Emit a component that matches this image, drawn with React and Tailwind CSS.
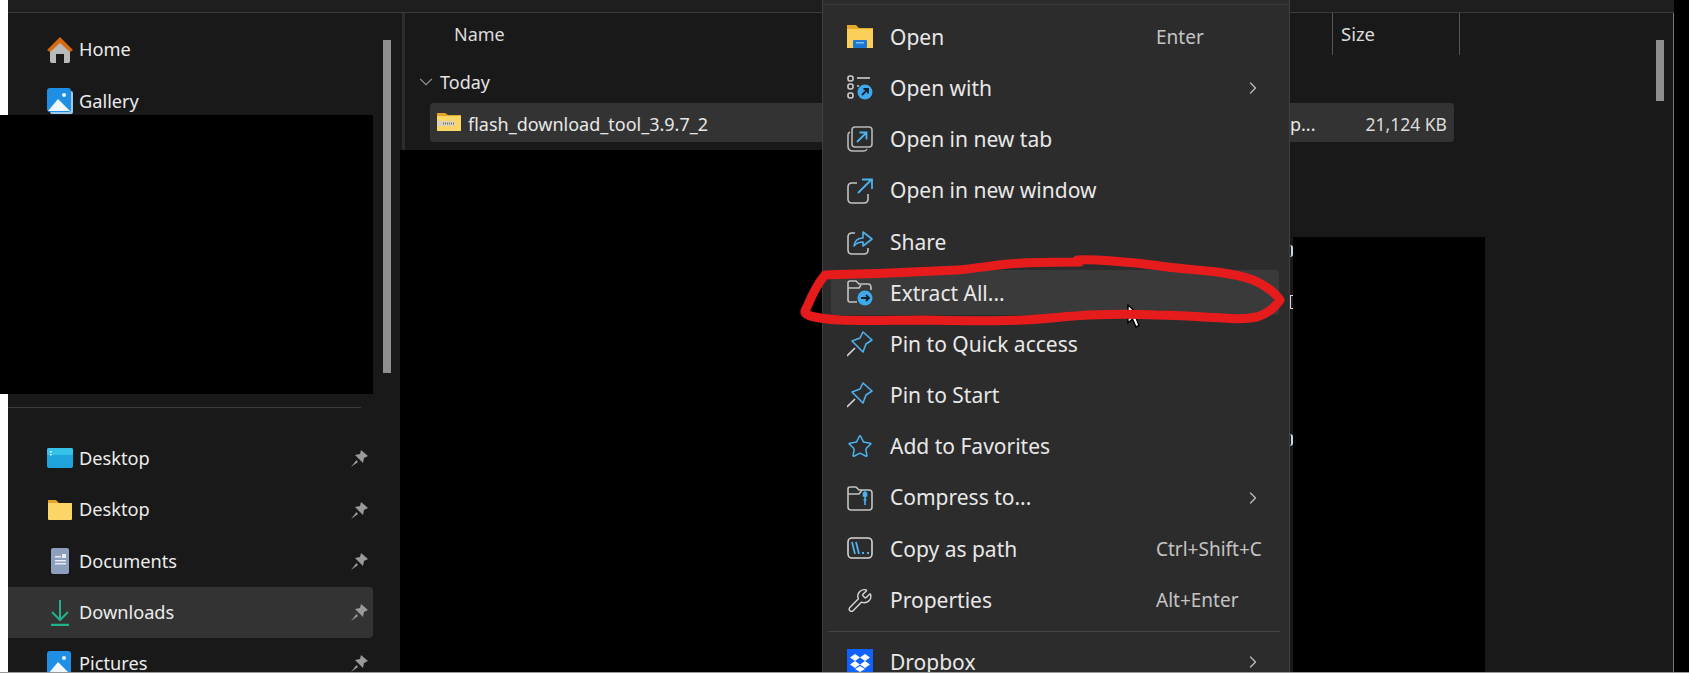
import React from 'react'
import { ChevronDown, ChevronRight, Star, Wrench } from 'lucide-react'

const FONT = { fontFamily: '"Noto Sans", "Open Sans", sans-serif' }

// ---- sidebar icons ----
const HomeIcon = () => (
  <svg width="26" height="26" viewBox="0 0 26 26">
    <path d="M3 12 L13 3 L23 12 V24 Q23 26 21 26 H17 V17 H9 V26 H5 Q3 26 3 24 Z" fill="#b9b9b9" />
    <path d="M0 13 L13 0 L26 13 L23 15 L13 6 L3 15 Z" fill="#d9690f" />
  </svg>
)
const PictureIcon = ({ stack }) => (
  <svg width="26" height="26" viewBox="0 0 26 26">
    {stack && <rect x="3" y="3" width="23" height="23" rx="2" fill="#9fc9e8" />}
    <rect x="0" y="0" width="24" height="24" rx="3" fill="#1f8fe6" />
    <path d="M1 23 L11 11 L23 23 Z" fill="#f1f8fd" />
    <circle cx="17" cy="7" r="2" fill="#eaf6ff" />
  </svg>
)
const DesktopIcon = () => (
  <svg width="26" height="26" viewBox="0 0 26 26">
    <rect x="0" y="2" width="26" height="20" rx="2" fill="#1ea3dc" />
    <rect x="0" y="2" width="26" height="7" rx="2" fill="#35c2ea" />
    <rect x="3" y="5" width="1.5" height="1.5" fill="#fff" />
    <rect x="3" y="8" width="1.5" height="1.5" fill="#fff" />
  </svg>
)
const FolderIcon = () => (
  <svg width="26" height="26" viewBox="0 0 26 26">
    <path d="M1 3 H9 L12 6 H25 V12 H1 Z" fill="#e3a42a" />
    <rect x="1" y="6" width="24" height="17" rx="1" fill="#fbd566" />
  </svg>
)
const DocumentIcon = () => (
  <svg width="26" height="26" viewBox="0 0 26 26">
    <rect x="4" y="0" width="18" height="26" rx="2" fill="#8c9fbd" />
    <rect x="8" y="8" width="6" height="1.5" fill="#e8edf5" />
    <rect x="8" y="12" width="11" height="1.5" fill="#e8edf5" />
    <rect x="8" y="15" width="11" height="1.5" fill="#e8edf5" />
    <rect x="15" y="6" width="4" height="4" fill="#e8edf5" />
  </svg>
)
const DownloadIcon = () => (
  <svg width="26" height="26" viewBox="0 0 26 26" fill="none" stroke="#21b28d" strokeWidth="2">
    <path d="M13 0 V19 M5 12 L13 20 L21 12" />
    <path d="M4 25 H22" strokeWidth="2.5" />
  </svg>
)
const SidePin = () => (
  <svg width="17" height="17" viewBox="0 0 17 17" fill="#9a9a9a">
    <path d="M10 0 L17 6 L13 8 L12 13 L4 5 L9 4 Z" />
    <path d="M5.5 10 L0 17 L7 12 Z" />
  </svg>
)

// ---- context menu icons ----
const OpenIcon = () => (
  <svg width="26" height="26" viewBox="0 0 26 26">
    <path d="M0 1 H9 L12 4 H26 V12 H0 Z" fill="#e6a82a" />
    <rect x="0" y="5" width="26" height="19" fill="#fbcf58" />
    <rect x="6" y="16" width="14" height="8" rx="1" fill="#1a78d4" />
    <rect x="9" y="18" width="8" height="1.5" fill="#7cc0f5" />
  </svg>
)
const OpenWithIcon = () => (
  <svg width="26" height="26" viewBox="0 0 26 26" fill="none" stroke="#cfcfcf" strokeWidth="1.6">
    <rect x="1" y="1" width="5" height="5" rx="2" />
    <rect x="1" y="9" width="5" height="5" rx="2" />
    <rect x="1" y="18" width="5" height="5" rx="2" />
    <path d="M10 3 H23" />
    <path d="M10 11 H12" />
    <circle cx="18" cy="17" r="7.5" fill="#3fa9ee" stroke="none" />
    <path d="M15 20 L21 14 M16.5 14 H21 V18.5" stroke="#10212e" strokeWidth="1.8" />
  </svg>
)
const NewTabIcon = () => (
  <svg width="26" height="26" viewBox="0 0 26 26" fill="none" stroke="#b8b8b8" strokeWidth="1.6">
    <path d="M3 6 Q1 7 1 9 V20 Q1 25 6 25 H17 Q19 25 20 23" />
    <rect x="5" y="1" width="20" height="20" rx="3" />
    <path d="M10 16 L19 7 M12.5 6.5 H19.5 V13.5" stroke="#4db2ee" strokeWidth="1.8" />
  </svg>
)
const NewWindowIcon = () => (
  <svg width="26" height="26" viewBox="0 0 26 26" fill="none" stroke="#c4c4c4" strokeWidth="1.6">
    <path d="M10 5 H5 Q1 5 1 9 V21 Q1 25 5 25 H17 Q21 25 21 21 V16" />
    <path d="M11 15 L24 2 M15 1.5 H25 V11" stroke="#4db2ee" strokeWidth="1.8" />
  </svg>
)
const ShareIcon = () => (
  <svg width="26" height="26" viewBox="0 0 26 26" fill="none" stroke="#c4c4c4" strokeWidth="1.6">
    <path d="M8 4 H5 Q1 4 1 8 V21 Q1 25 5 25 H17 Q21 25 21 21 V19" />
    <path d="M7 17 Q8 9 16 9 V3 L25 10 L16 17 V13 Q10 13 7 17 Z" stroke="#4db2ee" strokeLinejoin="round" />
  </svg>
)
const ExtractIcon = () => (
  <svg width="26" height="26" viewBox="0 0 26 26" fill="none" stroke="#c4c4c4" strokeWidth="1.6">
    <path d="M10 22 H3 Q1 22 1 20 V3 Q1 1 3 1 H9 L12 4 H21 Q24 4 24 8 V10" />
    <path d="M1 8 H12 L14 5" />
    <circle cx="18" cy="18" r="7.5" fill="#3fa9ee" stroke="none" />
    <path d="M14 18 H22 M19 15 L22 18 L19 21" stroke="#10212e" strokeWidth="1.8" />
  </svg>
)
const PinIcon = () => (
  <svg width="26" height="26" viewBox="0 0 26 26" fill="none" stroke="#4db2ee" strokeWidth="1.6" strokeLinejoin="round">
    <path d="M16 1 L25 9 L19 13 L16 21 L5 10 L13 7 Z" />
    <path d="M8 17 L0 25" stroke="#d6d6d6" />
  </svg>
)
const StarIcon = () => <Star size={27} strokeWidth={1.4} className="text-[#4db2ee]" />
const CompressIcon = () => (
  <svg width="26" height="26" viewBox="0 0 26 26" fill="none" stroke="#c4c4c4" strokeWidth="1.6">
    <path d="M3 2 H9 L12 5 H22 Q25 5 25 8 V22 Q25 25 22 25 H4 Q1 25 1 22 V4 Q1 2 3 2 Z" />
    <path d="M1 9 H12 L15 5" />
    <path d="M18 5 V20 M16.5 8 H19.5 V11 H16.5 Z M16.5 15 H19.5" stroke="#4db2ee" />
  </svg>
)
const CopyPathIcon = () => (
  <svg width="26" height="26" viewBox="0 0 26 26" fill="none" stroke="#d6d6d6" strokeWidth="1.6">
    <rect x="1" y="2" width="24" height="20" rx="4" />
    <path d="M5 6 L8 18 M9 6 L12 18" stroke="#4db2ee" strokeWidth="1.8" />
    <path d="M15 17 H17 M20 17 H22" stroke="#4db2ee" strokeWidth="2" />
  </svg>
)
const WrenchIcon = () => <Wrench size={27} strokeWidth={1.3} className="text-[#d6d6d6]" />
const DropboxIcon = () => (
  <svg width="26" height="26" viewBox="0 0 26 26">
    <rect width="26" height="26" fill="#0f62fe" />
    <path d="M8 5 L13 8.5 L8 12 L3 8.5 Z M18 5 L23 8.5 L18 12 L13 8.5 Z M8 12 L13 15.5 L8 19 L3 15.5 Z M18 12 L23 15.5 L18 19 L13 15.5 Z M8 20 L13 17 L18 20 L13 23 Z" fill="#fff" />
  </svg>
)

const SIDE_TOP = [
  { label: 'Home', icon: <HomeIcon /> },
  { label: 'Gallery', icon: <PictureIcon stack /> },
]
const SIDE_PINNED = [
  { label: 'Desktop', icon: <DesktopIcon /> },
  { label: 'Desktop', icon: <FolderIcon /> },
  { label: 'Documents', icon: <DocumentIcon /> },
  { label: 'Downloads', icon: <DownloadIcon />, active: true },
  { label: 'Pictures', icon: <PictureIcon /> },
]
const MENU = [
  { label: 'Open', icon: <OpenIcon />, keys: 'Enter' },
  { label: 'Open with', icon: <OpenWithIcon />, more: true },
  { label: 'Open in new tab', icon: <NewTabIcon /> },
  { label: 'Open in new window', icon: <NewWindowIcon /> },
  { label: 'Share', icon: <ShareIcon /> },
  { label: 'Extract All...', icon: <ExtractIcon />, hover: true },
  { label: 'Pin to Quick access', icon: <PinIcon /> },
  { label: 'Pin to Start', icon: <PinIcon /> },
  { label: 'Add to Favorites', icon: <StarIcon /> },
  { label: 'Compress to...', icon: <CompressIcon />, more: true },
  { label: 'Copy as path', icon: <CopyPathIcon />, keys: 'Ctrl+Shift+C' },
  { label: 'Properties', icon: <WrenchIcon />, keys: 'Alt+Enter' },
]

function SideRow({ item, pinned }) {
  return (
    <div className={`flex h-[51.2px] w-[365px] items-center rounded-r ${item.active ? 'bg-[#333333]' : ''}`}>
      <span className="ml-[39px] flex w-[26px] justify-center">{item.icon}</span>
      <span className="ml-[6px] flex-1 text-[18.2px] text-[#ececec]">{item.label}</span>
      {pinned && <span className="mr-[5px]"><SidePin /></span>}
    </div>
  )
}

function MenuRow({ item }) {
  return (
    <div className={`ml-[8px] mr-[10px] flex h-[45px] items-center ${item.hover ? 'rounded bg-[#3a3a3a]' : ''}`}>
      <span className="ml-[16px] flex w-[26px] justify-center">{item.icon}</span>
      <span className="ml-[17px] w-[266px] pt-px text-[21px] text-[#e8e8e8]">{item.label}</span>
      {item.keys && <span className="text-[19px] text-[#c4c4c4]">{item.keys}</span>}
      {item.more && <ChevronRight size={20} strokeWidth={1.5} className="ml-[87px] text-[#bdbdbd]" />}
    </div>
  )
}

export default function App() {
  return (
    <div className="relative flex h-[673px] w-[1689px] overflow-hidden bg-white" style={FONT}>
      <div className="ml-2 flex w-[1666px] flex-col bg-[#191919]">
        <div className="h-[13px] shrink-0 border-b border-[#3b3b3b] bg-[#1e1e1e]" />
        <div className="flex flex-1">
          {/* navigation pane */}
          <div className="relative w-[394px] shrink-0 pt-[11.4px]">
            {SIDE_TOP.map((it) => <SideRow key={it.label} item={it} />)}
            <div className="h-[280.2px]" />
            <div className="h-px w-[353px] bg-[#3a3a3a]" />
            <div className="h-[25.4px]" />
            {SIDE_PINNED.map((it) => <SideRow key={it.label + it.active} item={it} pinned />)}
            <div className="absolute left-[375px] top-[27px] h-[333px] w-2 bg-[#8f8f8f]" />
          </div>
          <div className="w-[3px] shrink-0 bg-[#2c2c2c]" />

          {/* file list */}
          <div className="relative flex-1">
            <div className="flex h-[42px] items-center">
              <div className="flex-1 pl-[49px] text-[18px] text-[#dcdcdc]">Name</div>
              <div className="flex h-full w-[127px] items-center border-l border-[#555555] pl-2 text-[18.5px] text-[#dcdcdc]">Size</div>
              <div className="h-full w-[214px] border-l border-[#555555]" />
            </div>
            <div className="flex h-[48px] items-center pl-[10px] pt-[6px]">
              <ChevronDown size={22} strokeWidth={1.3} className="text-[#8a8a8a]" />
              <span className="ml-[3px] text-[18px] text-[#e4e4e4]">Today</span>
            </div>
            <div className="ml-[25px] flex h-[39px] w-[1024px] items-center rounded-sm bg-[#333333] text-[#e8e8e8]">
              <svg width="24" height="20" viewBox="0 0 24 20" className="ml-[7px] -mt-[2px]">
                <path d="M0 1 H8 L11 3 H24 V8 H0 Z" fill="#e3a42a" />
                <rect x="0" y="4" width="24" height="15" fill="#fbd566" />
                <rect x="0" y="9" width="18" height="5" fill="#d9d3bd" />
                <path d="M6 11.5 H18" stroke="#77755f" strokeWidth="2" strokeDasharray="1 1" />
              </svg>
              <span className="ml-[7px] flex-1 pt-[3px] text-[18px]">flash_download_tool_3.9.7_2</span>
              <span className="pt-[3px] text-[18px]">op...</span>
              <span className="ml-[50px] mr-[7px] pt-[3px] text-[17.5px] text-[#dcdcdc]">21,124 KB</span>
            </div>
            <div className="absolute right-[9px] top-[27px] h-[61px] w-2 bg-[#8f8f8f]" />
          </div>
          <div className="w-px shrink-0 bg-[#7a7a7a]" />
        </div>
      </div>
      <div className="flex-1 bg-black" />

      {/* redaction blocks */}
      <div className="absolute left-0 top-[115px] h-[279px] w-[373px] bg-black" />
      <div className="absolute left-[400px] top-[150px] h-[523px] w-[423px] bg-black" />
      <div className="absolute left-[1293px] top-[237px] h-[436px] w-[192px] bg-black" />

      {/* context menu */}
      <div className="absolute left-[822px] top-0 h-[673px] w-[468px] border-l border-r border-[#3f3f3f] bg-[#2c2c2c]">
        <div className="mt-[4px] h-px bg-[#3c3c3c]" />
        <div className="flex flex-col gap-[6.2px] pt-[9.5px]">
          {MENU.map((it) => <MenuRow key={it.label} item={it} />)}
        </div>
        <div className="ml-[5px] mr-[9px] mt-[8.1px] h-px bg-[#454545]" />
        <div className="ml-[8px] mr-[10px] mt-[5px] flex h-[51.2px] items-center">
          <span className="ml-[16px] flex w-[26px] justify-center"><DropboxIcon /></span>
          <span className="ml-[17px] w-[337px] text-[21px] text-[#e8e8e8]">Dropbox</span>
          <ChevronRight size={20} strokeWidth={1.5} className="ml-[16px] text-[#bdbdbd]" />
        </div>
      </div>

      {/* leftover glyph edges beside the redaction */}
      <span className="absolute left-[1290px] top-[245px] h-[12px] w-[3px] rounded-r-full border-r-2 border-[#c8d8e8]" />
      <span className="absolute left-[1290px] top-[295px] h-[14px] w-[3px] border-l border-t border-b border-[#d8d8d8]" />
      <span className="absolute left-[1290px] top-[434px] h-[12px] w-[3px] rounded-r-full border-r-2 border-[#c8d8e8]" />

      {/* mouse cursor */}
      <svg width="16" height="24" viewBox="0 0 16 24" className="absolute left-[1127px] top-[304px]">
        <path d="M1 1 V19 L5.5 15 L9 23 L12 21.5 L9 14 L15 14 Z" fill="#fff" stroke="#000" strokeWidth="1.4" />
      </svg>

      {/* hand drawn annotation */}
      <svg width="1689" height="673" viewBox="0 0 1689 673" className="pointer-events-none absolute left-0 top-0">
        <path
          d="M1077 260 C1095 259 1108 261 1123 262 C1140 263 1152 265 1167 267 C1185 269 1200 270 1217 272 C1232 274 1243 276 1253 280 C1265 285 1275 293 1280 300 C1274 309 1266 314 1257 317 C1247 319 1235 319 1223 318 C1200 317 1180 315 1157 315 C1135 314 1112 314 1090 315 C1068 316 1045 319 1023 320 C990 321 955 321 923 320 C895 320 868 321 840 320 C825 319 815 318 808 315 C803 313 805 310 807 307 C812 295 818 283 825 275 C845 274 868 274 890 273 C912 272 935 271 957 270 C980 268 1000 264 1023 263 C1042 262 1060 262 1080 262"
          fill="none" stroke="#e61c1c" strokeWidth="9" strokeLinecap="round" strokeLinejoin="round"
        />
      </svg>

      <div className="absolute bottom-0 left-0 h-px w-full bg-[#9a9a9a]" />
    </div>
  )
}
